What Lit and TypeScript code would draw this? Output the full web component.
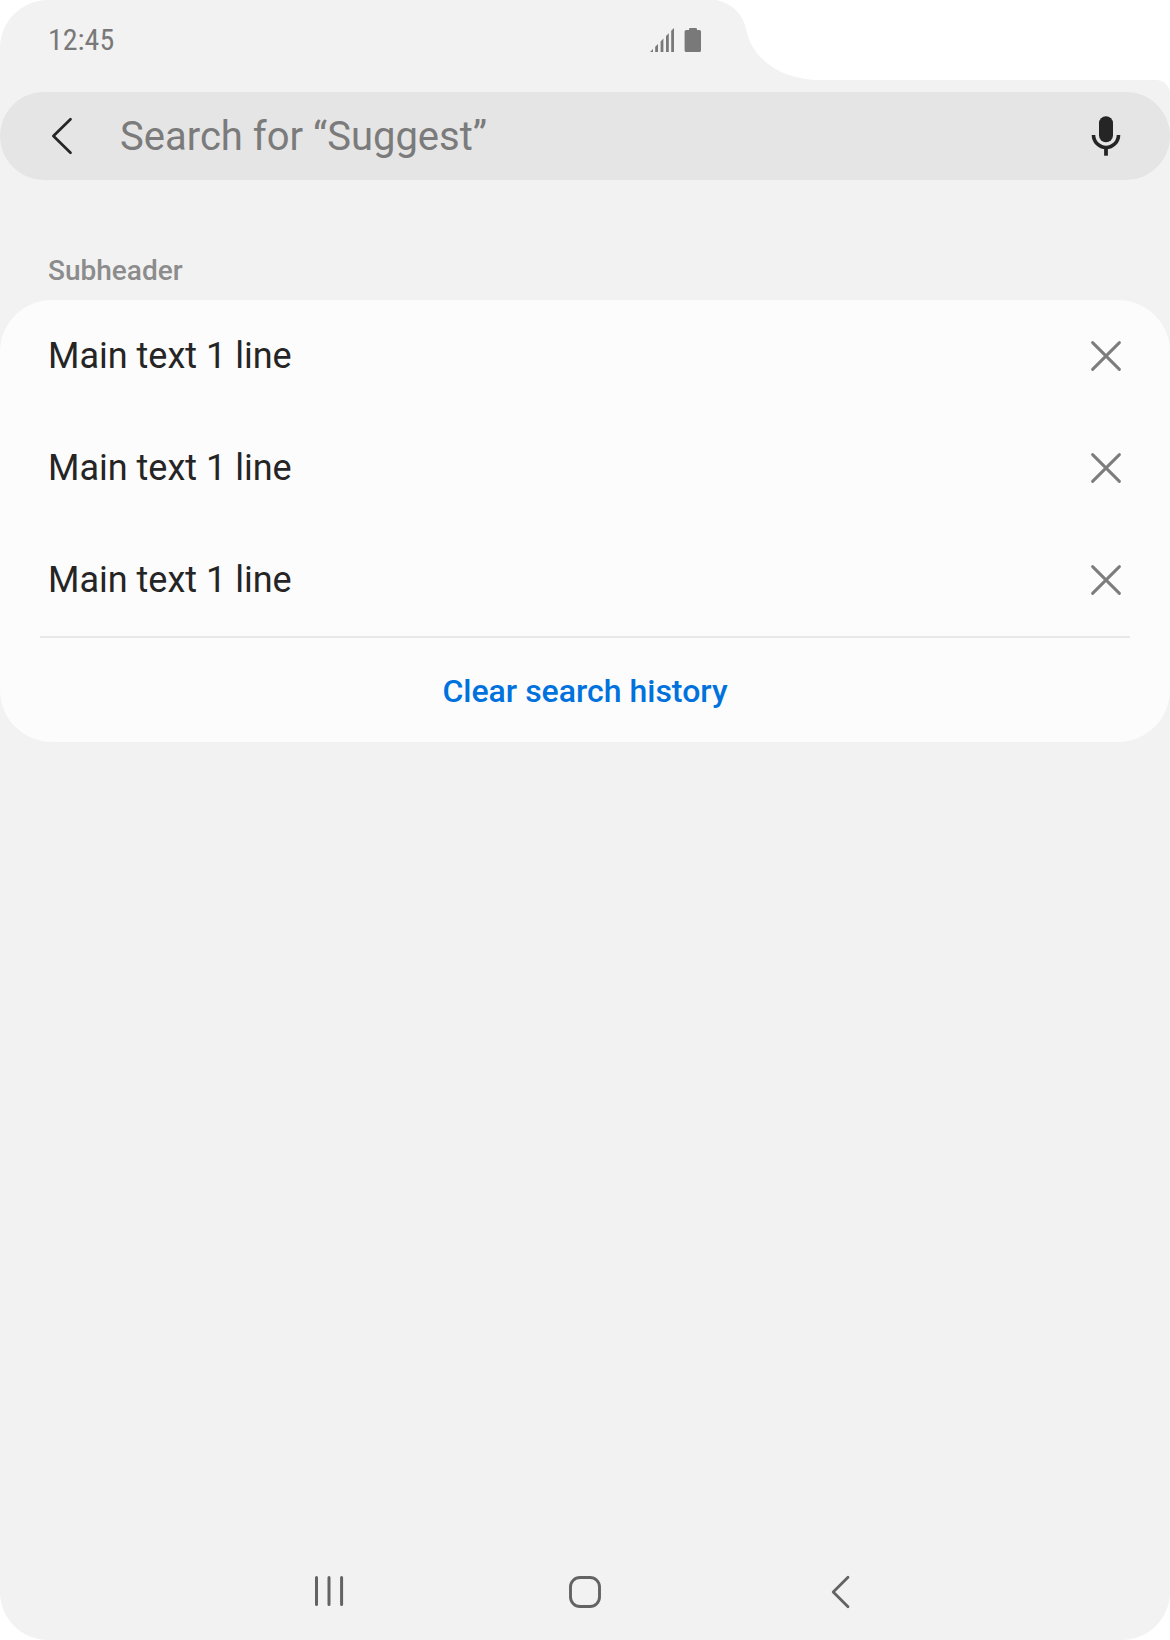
import { LitElement, html, css, svg } from "lit";
import { customElement, state } from "lit/decorators.js";

interface HistoryEntry {
  id: number;
  label: string;
}

const signalIcon = svg`
  <svg class="glyph" width="24" height="24" viewBox="0 0 24 24" aria-hidden="true">
    <path fill="currentColor" d="M0 24L3 21V24ZM5.2 24V18.8L8 16V24ZM10.6 24V13.4L13.4 10.6V24ZM16 24V8L18.8 5.2V24ZM21.2 24V2.8L24 0V24Z" />
  </svg>`;

const batteryIcon = svg`
  <svg class="glyph" width="18" height="24" viewBox="0 0 18 24" aria-hidden="true">
    <path fill="currentColor" d="M5 2V1.2Q5 0 6.2 0H11.8Q13 0 13 1.2V2H15.5Q17 2 17 3.5V22.5Q17 24 15.5 24H2.3Q.6 24 .6 22.5V3.5Q.6 2 2.3 2Z" />
  </svg>`;

const backIcon = svg`
  <svg class="glyph" width="48" height="48" viewBox="0 0 48 48" aria-hidden="true">
    <path d="M34.5 7.2L17.4 24L34.5 40.8" fill="none" stroke="currentColor" stroke-width="2.7" stroke-linecap="round" stroke-linejoin="round" />
  </svg>`;

const micIcon = svg`
  <svg class="glyph" width="48" height="48" viewBox="0 0 48 48" aria-hidden="true">
    <rect x="17" y="4.2" width="14" height="26" rx="7" fill="currentColor" />
    <path d="M11.5 23A12.5 12.5 0 0 0 36.5 23" fill="none" stroke="currentColor" stroke-width="3.6" />
    <path d="M24 35V43.7" stroke="currentColor" stroke-width="3.8" />
  </svg>`;

const closeIcon = svg`
  <svg class="glyph" width="48" height="48" viewBox="0 0 48 48" aria-hidden="true">
    <path d="M10.6 10.6L37.4 37.4M37.4 10.6L10.6 37.4" stroke="currentColor" stroke-width="3" stroke-linecap="round" />
  </svg>`;

const recentsIcon = svg`
  <svg class="glyph" width="48" height="48" viewBox="0 0 48 48" aria-hidden="true">
    <path d="M11.5 9.5V36.5M24 9.5V36.5M36.6 9.5V36.5" stroke="currentColor" stroke-width="3" stroke-linecap="round" />
  </svg>`;

const homeIcon = svg`
  <svg class="glyph" width="48" height="48" viewBox="0 0 48 48" aria-hidden="true">
    <rect x="9.5" y="9.5" width="29" height="29" rx="9.5" fill="none" stroke="currentColor" stroke-width="2.9" />
  </svg>`;

const navBackIcon = svg`
  <svg class="glyph" width="48" height="48" viewBox="0 0 48 48" aria-hidden="true">
    <path d="M31 9.2L16.2 24L31 38.8" fill="none" stroke="currentColor" stroke-width="2.8" stroke-linecap="round" stroke-linejoin="round" />
  </svg>`;

@customElement("app-root")
export class AppRoot extends LitElement {
  @state() private entries: HistoryEntry[] = [1, 2, 3].map((id) => ({ id, label: "Main text 1 line" }));

  static styles = css`
    :host {
      display: flex;
      flex-direction: column;
      min-height: 100vh;
      background: #ffffff;
      color: #252525;
      font-family: Roboto, sans-serif;
    }
    * {
      box-sizing: border-box;
    }
    button,
    input {
      margin: 0;
      padding: 0;
      border: 0;
      background: none;
      color: inherit;
      font: inherit;
    }
    button {
      cursor: pointer;
    }
    .glyph {
      display: block;
      flex: none;
    }
    .top {
      display: flex;
      height: 80px;
    }
    .status {
      flex: 0 0 61.2%;
      display: flex;
      align-items: center;
      gap: 10px;
      padding: 0 14px 0 48px;
      border-top-left-radius: 48px;
      background: #f2f2f2;
      color: #797979;
    }
    .clock {
      margin-right: auto;
      font-family: "Roboto Condensed", Roboto, sans-serif;
      font-size: 30px;
      line-height: 40px;
    }
    .shoulder {
      display: block;
      flex: none;
    }
    .screen {
      flex: 1;
      display: flex;
      flex-direction: column;
      padding-top: 12px;
      border-radius: 0 14px 48px 48px;
      background: #f2f2f2;
    }
    .search {
      display: flex;
      align-items: center;
      height: 88px;
      padding: 0 40px 0 36px;
      border-radius: 44px;
      background: #e5e5e5;
    }
    .field {
      flex: 1;
      min-width: 0;
      margin-left: 36px;
      height: 56px;
      font-size: 40px;
      outline: none;
    }
    .field::placeholder {
      color: #7b7b7b;
      opacity: 1;
    }
    .subheader {
      margin: 0;
      padding: 72px 48px 10px;
      font-size: 28px;
      font-weight: 500;
      line-height: 38px;
      color: #8c8c8c;
    }
    .card {
      border-radius: 52px;
      background: #fcfcfc;
    }
    .list {
      margin: 0;
      padding: 0;
      list-style: none;
    }
    .row {
      display: flex;
      align-items: center;
      justify-content: space-between;
      height: 112px;
      padding: 0 40px 0 48px;
      font-size: 36px;
      line-height: 48px;
    }
    .remove {
      color: #7d7d7d;
    }
    .divider {
      height: 2px;
      margin: 0 40px;
      border: 0;
      background: #e8e8e8;
    }
    .clear {
      display: block;
      width: 100%;
      height: 104px;
      padding-top: 2px;
      font-size: 32px;
      font-weight: 500;
      color: #0072de;
    }
    .nav {
      display: grid;
      grid-template-columns: repeat(3, 1fr);
      justify-items: center;
      width: 768px;
      max-width: 100%;
      margin: auto auto 0;
      padding: 24px 0;
      color: #636363;
    }
  `;

  private remove(id: number) {
    this.entries = this.entries.filter((entry) => entry.id !== id);
  }

  render() {
    return html`
      <header class="top">
        <div class="status">
          <time class="clock">12:45</time>
          ${signalIcon} ${batteryIcon}
        </div>
        <svg class="shoulder" width="104" height="80" viewBox="0 0 104 80" aria-hidden="true">
          <path fill="#f2f2f2" d="M0 0C16 3 27 14 30 29C36 60 66 80 104 80H0Z" />
        </svg>
      </header>
      <main class="screen">
        <form class="search" role="search" @submit=${(e: Event) => e.preventDefault()}>
          <button type="button" aria-label="Back">${backIcon}</button>
          <input class="field" type="text" aria-label="Search" placeholder="Search for “Suggest”" />
          <button type="button" aria-label="Voice search">${micIcon}</button>
        </form>
        <h2 class="subheader">Subheader</h2>
        <section class="card">
          <ul class="list">
            ${this.entries.map(
              (entry) => html`
                <li class="row">
                  <span>${entry.label}</span>
                  <button class="remove" type="button" aria-label="Remove" @click=${() => this.remove(entry.id)}>
                    ${closeIcon}
                  </button>
                </li>
              `
            )}
          </ul>
          <hr class="divider" />
          <button class="clear" type="button" @click=${() => (this.entries = [])}>Clear search history</button>
        </section>
        <nav class="nav" aria-label="System">
          <button type="button" aria-label="Recents">${recentsIcon}</button>
          <button type="button" aria-label="Home">${homeIcon}</button>
          <button type="button" aria-label="Back">${navBackIcon}</button>
        </nav>
      </main>
    `;
  }
}
